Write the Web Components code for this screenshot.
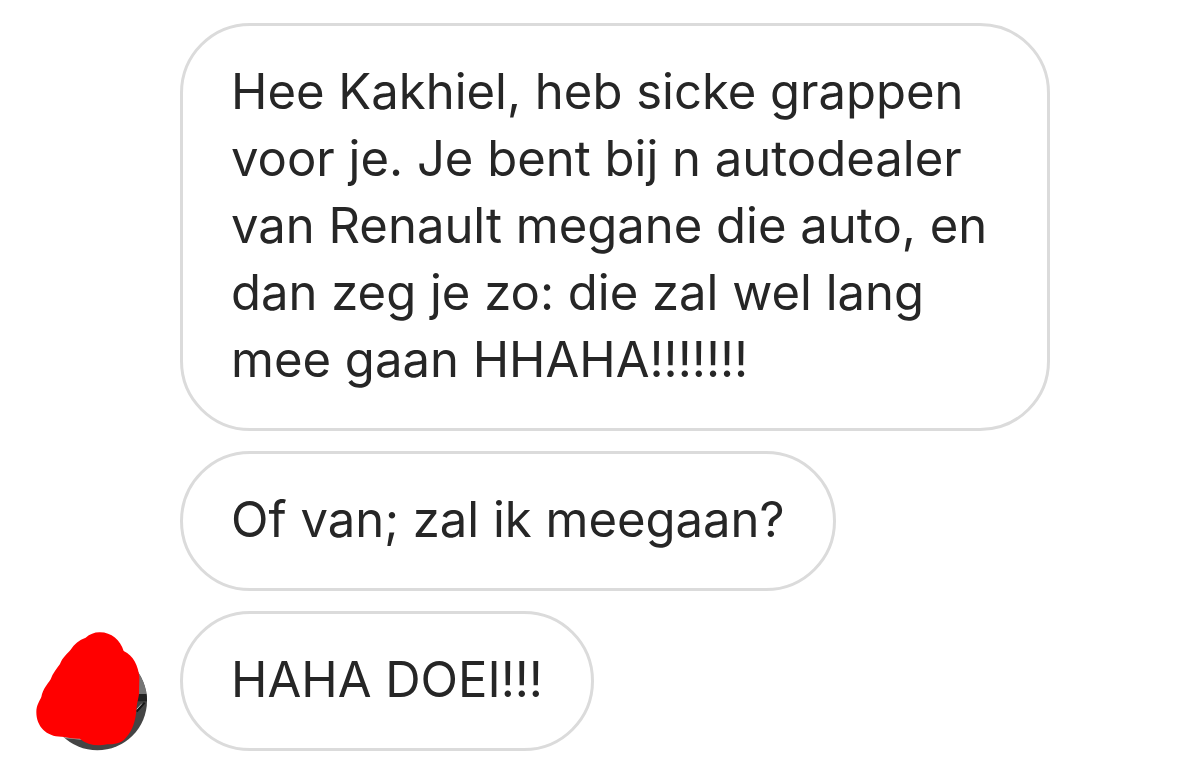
<!DOCTYPE html>
<html lang="nl"><head><meta charset="utf-8"><title>Chat</title><style>body{margin:0;background:#fff;color:#262626;font-family:Inter,sans-serif}</style></head><body>
<chat-thread><user-avatar slot="avatar"></user-avatar>
<chat-bubble>Hee Kakhiel, heb sicke grappen voor je. Je bent bij n autodealer van Renault megane die auto, en dan zeg je zo: die zal wel lang mee gaan HHAHA!!!!!!!</chat-bubble>
<chat-bubble>Of van; zal ik meegaan?</chat-bubble>
<chat-bubble>HAHA DOEI!!!</chat-bubble></chat-thread>
<script>
class ChatThread extends HTMLElement{constructor(){super();this.attachShadow({mode:'open'}).innerHTML=`<style>:host{display:flex;align-items:flex-end;gap:32px;padding:23px 150px 32px 36px}.messages{display:flex;flex:1;min-width:0;flex-direction:column;align-items:flex-start;gap:20px}</style><slot name="avatar"></slot><div class="messages"><slot></slot></div>`}}
class ChatBubble extends HTMLElement{constructor(){super();this.attachShadow({mode:'open'}).innerHTML=`<style>:host{display:block;box-sizing:border-box;max-width:100%;padding:32px 48px 35px;border:3px solid #dbdbdb;border-radius:70px}p{margin:0;font-size:49px;line-height:67px}</style><p><slot></slot></p>`}}
class UserAvatar extends HTMLElement{constructor(){super();this.attachShadow({mode:'open'}).innerHTML=`<style>:host{display:block;flex:none}svg{display:block}</style>
<svg width="112" height="120" viewBox="48 33 336 360" aria-hidden="true">
<defs><clipPath id="photo"><circle cx="232" cy="242" r="149"/></clipPath></defs>
<g clip-path="url(#photo)"><path fill="#444" d="M70 80h320v320H70z"/><path fill="#747474" d="M340 140h50v82h-50z"/><path fill="#222" d="M340 222h50v22h-50z"/><path d="M350 268l16-17" stroke="#c8c8c8" stroke-width="3"/><path d="M350 275l24-27" stroke="#151515" stroke-width="6"/><path d="M120 350l35 3 35 4" stroke="#aaa" stroke-width="6"/></g>
<path fill="red" d="M238 37C273 36 301 60 311 93C341 107 354 137 358 170L357 222C354 243 350 250 349 270C347 303 337 333 317 354C303 371 282 373 262 373C229 380 203 374 179 356C158 357 143 351 126 350C80 351 49 320 49 276C49 257 58 244 64 231C69 206 82 194 92 178C98 159 110 147 120 132C127 112 142 101 152 89C163 72 177 60 197 53C209 43 223 37 238 37Z"/></svg>`}}
customElements.define('chat-thread',ChatThread);customElements.define('chat-bubble',ChatBubble);customElements.define('user-avatar',UserAvatar);
</script></body></html>
